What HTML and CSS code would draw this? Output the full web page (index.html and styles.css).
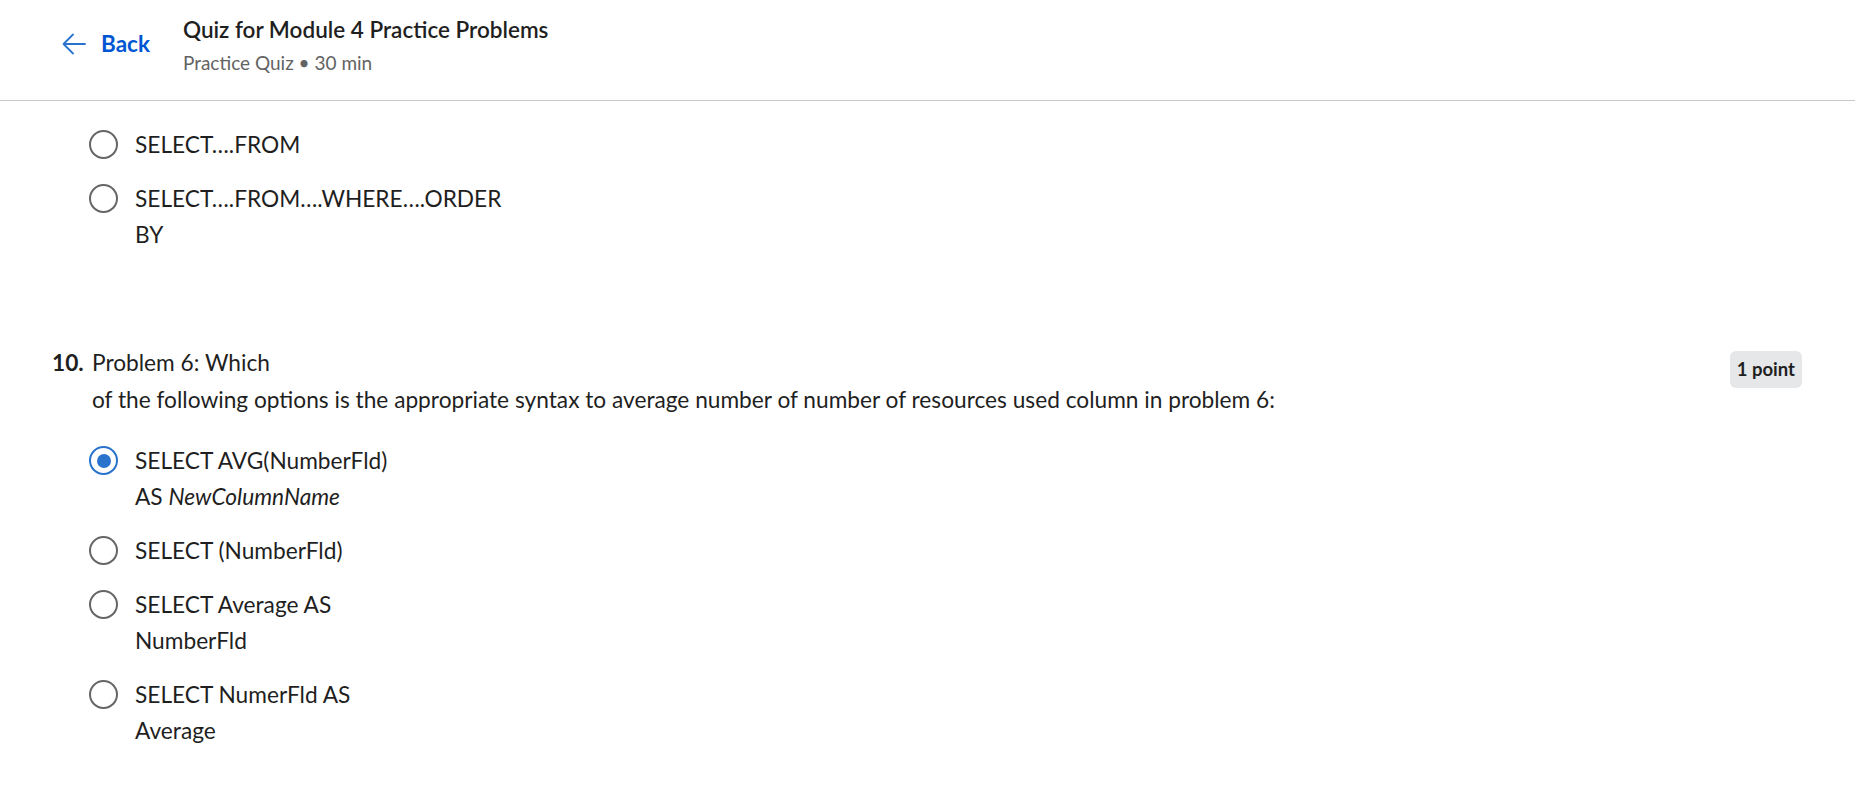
FILE: index.html
```html
<!DOCTYPE html>
<html lang="en">
<head>
<meta charset="utf-8">
<title>Quiz for Module 4 Practice Problems</title>
<link rel="stylesheet" href="styles.css">
</head>
<body>
<header class="topbar">
  <a class="back" href="#">
    <svg class="back-icon" width="26" height="26" viewBox="0 0 26 26" aria-hidden="true">
      <path d="M24 13H2.5M12 3.5L2.5 13L12 22.5" fill="none" stroke="#2a73cc" stroke-width="1.8" stroke-linecap="round" stroke-linejoin="round"/>
    </svg>
    <span>Back</span>
  </a>
  <div class="title-block">
    <h1 class="title">Quiz for Module 4 Practice Problems</h1>
    <div class="subtitle">Practice Quiz • 30 min</div>
  </div>
</header>

<main class="content">
  <ul class="options options-prev">
    <li class="option"><span class="radio"></span><span class="opt-text">SELECT….FROM</span></li>
    <li class="option"><span class="radio"></span><span class="opt-text">SELECT….FROM….WHERE….ORDER<br>BY</span></li>
  </ul>

  <section class="question">
    <div class="q-head">
      <span class="q-num">10.</span>
      <div class="q-text">
        <p>Problem 6: Which</p>
        <p>of the following options is the appropriate syntax to average number of number of resources used column in problem 6:</p>
      </div>
      <span class="points">1 point</span>
    </div>
    <ul class="options">
      <li class="option"><span class="radio checked"></span><span class="opt-text">SELECT AVG(NumberFld)<br>AS <em>NewColumnName</em></span></li>
      <li class="option"><span class="radio"></span><span class="opt-text">SELECT (NumberFld)</span></li>
      <li class="option"><span class="radio"></span><span class="opt-text">SELECT Average AS<br>NumberFld</span></li>
      <li class="option"><span class="radio"></span><span class="opt-text">SELECT NumerFld AS<br>Average</span></li>
    </ul>
  </section>
</main>
</body>
</html>
```

FILE: styles.css
```css
* { box-sizing: border-box; }

html, body {
  margin: 0;
  padding: 0;
  background: #ffffff;
}

body {
  font-family: "Source Sans Pro", Lato, "Noto Sans", sans-serif;
  color: #1f1f1f;
  font-size: 22.7px;
}

.topbar {
  height: 101px;
  border-bottom: 1px solid #c9c9c9;
  display: flex;
  align-items: flex-start;
}

.back {
  display: flex;
  align-items: center;
  gap: 14px;
  margin-left: 61px;
  margin-top: 31px;
  color: #0056d2;
  text-decoration: none;
  font-weight: 700;
  font-size: 22.5px;
  line-height: 26px;
}

.back-icon { display: block; }

.title-block {
  margin-left: 33px;
  padding-top: 15px;
}

.title {
  margin: 0;
  font-size: 22.5px;
  font-weight: 600;
  line-height: 30px;
  color: #1f1f1f;
}

.subtitle {
  margin-top: 3px;
  font-size: 19px;
  line-height: 30px;
  color: #636363;
}

.content {
  padding: 26px 53px 0 52px;
}

.options {
  list-style: none;
  margin: 0;
  padding: 0 0 0 37px;
  display: flex;
  flex-direction: column;
  gap: 18px;
}

.option {
  display: flex;
  align-items: flex-start;
  gap: 17px;
  line-height: 36px;
}

.radio {
  flex: none;
  width: 29px;
  height: 29px;
  margin-top: 3px;
  border: 2.8px solid #666666;
  border-radius: 50%;
  position: relative;
}

.radio.checked {
  border-color: #2a73cc;
}

.radio.checked::after {
  content: "";
  position: absolute;
  left: 50%;
  top: 50%;
  width: 14px;
  height: 14px;
  margin: -7px 0 0 -7px;
  border-radius: 50%;
  background: #2a73cc;
}

.opt-text em { font-style: italic; }

.question {
  margin-top: 92px;
}

.q-head {
  display: flex;
  align-items: flex-start;
  line-height: 36px;
}

.q-num {
  font-weight: 700;
  width: 40px;
  flex: none;
}

.q-text {
  flex: 1;
}

.q-text p {
  margin: 0;
}

.q-text p + p { margin-top: 1px; }

.points {
  flex: none;
  margin-top: 6px;
  background: #e5e7e8;
  border-radius: 6px;
  font-weight: 700;
  font-size: 18.5px;
  line-height: 37px;
  padding: 0 7px;
}

.question .options {
  margin-top: 25px;
}
```
